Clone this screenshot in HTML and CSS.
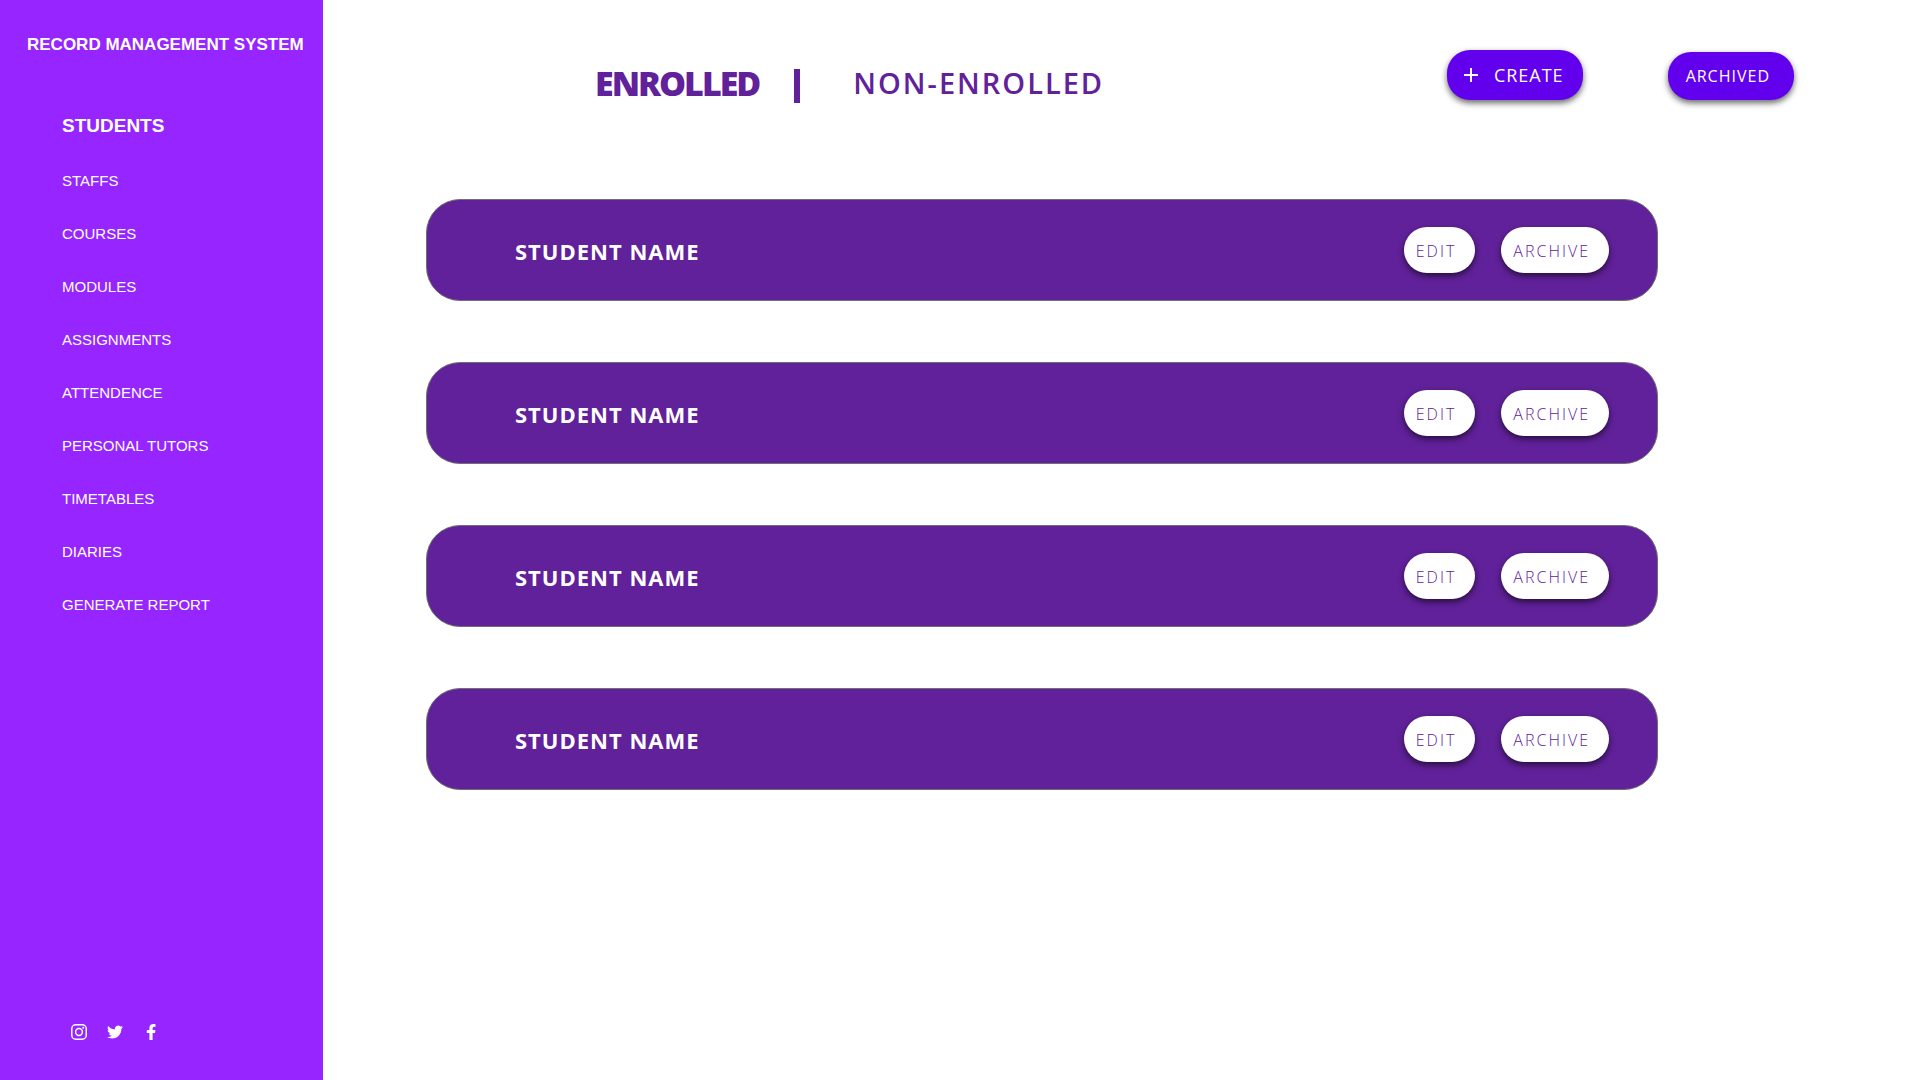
FILE: index.html
```html
<!DOCTYPE html>
<html lang="en">
<head>
<meta charset="utf-8">
<meta name="viewport" content="width=device-width, initial-scale=1">
<title>Record Management System</title>
<link rel="stylesheet" href="styles.css">
</head>
<body>
<div class="layout">
  <aside class="sidebar">
    <h1 class="brand">RECORD MANAGEMENT SYSTEM</h1>
    <nav class="menu" aria-label="Main">
      <a class="menu-link active" href="#students" aria-current="page">STUDENTS</a>
      <a class="menu-link" href="#staffs">STAFFS</a>
      <a class="menu-link" href="#courses">COURSES</a>
      <a class="menu-link" href="#modules">MODULES</a>
      <a class="menu-link" href="#assignments">ASSIGNMENTS</a>
      <a class="menu-link" href="#attendence">ATTENDENCE</a>
      <a class="menu-link" href="#tutors">PERSONAL TUTORS</a>
      <a class="menu-link" href="#timetables">TIMETABLES</a>
      <a class="menu-link" href="#diaries">DIARIES</a>
      <a class="menu-link" href="#report">GENERATE REPORT</a>
    </nav>
    <div class="social">
      <a href="#instagram" aria-label="Instagram">
        <svg viewBox="0 0 16 16" width="16" height="16" fill="none" stroke="currentColor" stroke-width="1.5"><rect x=".75" y=".75" width="14.5" height="14.5" rx="4"/><circle cx="8" cy="8" r="3.4"/><circle cx="12.2" cy="3.8" r="1" fill="currentColor" stroke="none"/></svg>
      </a>
      <a href="#twitter" aria-label="Twitter">
        <svg viewBox="0 0 24 24" width="16" height="16" fill="currentColor"><path d="M23.95 4.57a10 10 0 0 1-2.82.77 4.96 4.96 0 0 0 2.16-2.72c-.95.55-2 .95-3.13 1.18a4.92 4.92 0 0 0-8.38 4.48C7.69 8.1 4.07 6.13 1.64 3.16a4.82 4.82 0 0 0-.67 2.48c0 1.71.87 3.21 2.19 4.1a4.9 4.9 0 0 1-2.23-.62v.06a4.92 4.92 0 0 0 3.95 4.83 5 5 0 0 1-2.21.08 4.94 4.94 0 0 0 4.6 3.42A9.87 9.87 0 0 1 0 19.54a13.99 13.99 0 0 0 7.55 2.21c9.05 0 14-7.5 14-13.98 0-.21 0-.42-.02-.63a9.94 9.94 0 0 0 2.46-2.55z"/></svg>
      </a>
      <a href="#facebook" aria-label="Facebook">
        <svg viewBox="0 0 16 16" width="16" height="16" fill="currentColor"><path d="M6.4 16V9H3.8V6.1h2.6V4C6.4 1.5 7.9.1 10.3.1c1.1 0 2.2.2 2.2.2v2.4h-1.2c-1.2 0-1.7.8-1.7 1.6v1.8h2.8L12 9H9.600v7z"/></svg>
      </a>
    </div>
  </aside>
  <main class="content">
    <header class="toolbar">
      <nav class="tabs" aria-label="Enrolment">
        <a class="tab current" href="#enrolled" aria-current="true">ENROLLED</a>
        <span class="divider"></span>
        <a class="tab" href="#non-enrolled">NON-ENROLLED</a>
      </nav>
      <div class="actions">
        <button class="btn create" type="button">
          <svg viewBox="0 0 14 14" width="14" height="14" stroke="currentColor" stroke-width="2" aria-hidden="true"><path d="M7 0v14M0 7h14"/></svg>
          CREATE
        </button>
        <button class="btn archived" type="button">ARCHIVED</button>
      </div>
    </header>
    <ul class="students">
      <li class="student">
        <span class="name">STUDENT NAME</span>
        <button class="btn small" type="button">EDIT</button>
        <button class="btn small" type="button">ARCHIVE</button>
      </li>
      <li class="student">
        <span class="name">STUDENT NAME</span>
        <button class="btn small" type="button">EDIT</button>
        <button class="btn small" type="button">ARCHIVE</button>
      </li>
      <li class="student">
        <span class="name">STUDENT NAME</span>
        <button class="btn small" type="button">EDIT</button>
        <button class="btn small" type="button">ARCHIVE</button>
      </li>
      <li class="student">
        <span class="name">STUDENT NAME</span>
        <button class="btn small" type="button">EDIT</button>
        <button class="btn small" type="button">ARCHIVE</button>
      </li>
    </ul>
  </main>
</div>
</body>
</html>
```
FILE: styles.css
```css
* { box-sizing: border-box; }

body {
  margin: 0;
  background: #fff;
  font-family: "Open Sans", "Noto Sans", sans-serif;
}

a { color: inherit; text-decoration: none; }
svg { display: block; }

.layout {
  display: grid;
  grid-template-columns: 323px 1fr;
  min-height: 100vh;
}

/* Sidebar */
.sidebar {
  display: flex;
  flex-direction: column;
  padding: 33px 0 40px;
  background: #9625ff;
  color: #fff;
  font-family: "Liberation Sans", Arial, sans-serif;
}

.brand {
  margin: 0 0 41px;
  padding-left: 27px;
  font-size: 17px;
  line-height: 24px;
  white-space: nowrap;
}

.menu {
  display: flex;
  flex-direction: column;
  padding-left: 62px;
}

.menu-link {
  font-size: 15px;
  line-height: 53px;
}

.menu-link.active {
  font-size: 19px;
  font-weight: 700;
  line-height: 56px;
}

.social {
  display: flex;
  gap: 20px;
  margin-top: auto;
  padding-left: 71px;
}

/* Top bar */
.content { padding-top: 50px; }

.toolbar {
  display: flex;
  justify-content: space-between;
  align-items: flex-start;
  padding: 0 126px 0 272px;
}

.tabs {
  display: flex;
  align-items: center;
  margin-top: 16px;
  color: #61219a;
}

.tab {
  padding-bottom: 6px;
  font-size: 29px;
  font-weight: 600;
  line-height: 34px;
  letter-spacing: 2px;
}

.tab.current {
  font-size: 34px;
  font-weight: 800;
  letter-spacing: -2px;
}

.divider {
  width: 6px;
  height: 34px;
  margin: 0 53px 0 35px;
  background: currentColor;
}

.actions {
  display: flex;
  align-items: flex-end;
  gap: 85px;
}

.btn {
  display: flex;
  align-items: center;
  border: 0;
  border-radius: 23px;
  background: #6200ee;
  box-shadow: 0 3px 6px rgba(0, 0, 0, 0.6);
  color: #fff;
  font-family: inherit;
  font-size: 16px;
  letter-spacing: 1px;
  cursor: pointer;
}

.create {
  gap: 16px;
  height: 50px;
  padding: 0 19px 0 17px;
  font-size: 18px;
}

.archived {
  height: 48px;
  padding: 0 24px 0 18px;
}

/* Student list */
.students {
  display: grid;
  gap: 61px;
  margin: 0;
  padding: 93px 262px 0 103px;
  list-style: none;
}

.student {
  display: flex;
  align-items: center;
  gap: 26px;
  height: 102px;
  padding: 0 48px 0 88px;
  border: 1px solid #707070;
  border-radius: 34px;
  background: #61219a;
}

.name {
  flex: 1;
  padding-top: 2px;
  color: #fff;
  font-size: 22px;
  font-weight: 700;
  letter-spacing: 1px;
}

.small {
  height: 46px;
  padding: 2px 19px 0 12px;
  background: #fff;
  color: #61219a;
  font-weight: 300;
  letter-spacing: 2px;
}
```
